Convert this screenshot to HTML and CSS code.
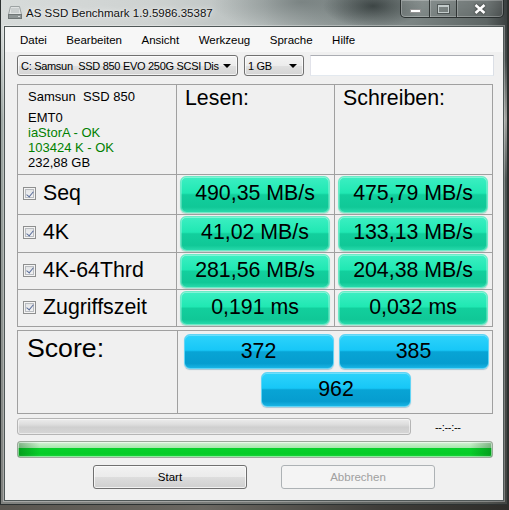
FILE: index.html
```html
<!DOCTYPE html>
<html lang="de">
<head>
    <meta charset="UTF-8">
    <title>AS SSD Benchmark 1.9.5986.35387</title>
    <link rel="stylesheet" href="styles.css">
</head>
<body>

<div class="window">
    <div class="titlebar">
        <!-- Laufwerks-Symbol -->
        <svg class="app-icon" width="16" height="15" viewBox="0 0 16 15">
            <path d="M3.5 1.5h9l2 8h-13z" fill="#dfe2e2" stroke="#9ca2a2"/>
            <path d="M5 3v5M7 3v5M9 3v5M11 3v5" stroke="#b4baba"/>
            <rect x="1.5" y="9.5" width="13" height="4" fill="#8e9595" stroke="#6f7676"/>
            <rect x="11" y="11" width="2" height="1" fill="#d6dada"/>
        </svg>
        <span class="title">AS SSD Benchmark 1.9.5986.35387</span>
        <div class="caption">
            <span class="cap min"><i></i></span>
            <span class="cap max"><i></i></span>
            <span class="cap close">
                <svg width="12" height="10" viewBox="0 0 12 10">
                    <path d="M1.5 1 L10.5 9 M10.5 1 L1.5 9" stroke="#fff" stroke-width="2.6"/>
                </svg>
            </span>
        </div>
    </div>

    <div class="client">
        <ul class="menu">
            <li>Datei</li>
            <li>Bearbeiten</li>
            <li>Ansicht</li>
            <li>Werkzeug</li>
            <li>Sprache</li>
            <li>Hilfe</li>
        </ul>

        <div class="content">
            <div class="toolbar">
                <div class="combo drive"><span>C: Samsun&nbsp; SSD 850 EVO 250G SCSI Dis</span><b></b></div>
                <div class="combo size"><span>1 GB</span><b></b></div>
                <div class="textbox"></div>
            </div>

            <div class="results">
                <div class="cell info">
                    <div class="model">Samsun&nbsp; SSD 850</div>
                    <div>EMT0</div>
                    <div class="ok">iaStorA - OK</div>
                    <div class="ok">103424 K - OK</div>
                    <div>232,88 GB</div>
                </div>
                <div class="cell head">Lesen:</div>
                <div class="cell head">Schreiben:</div>

                <div class="cell label"><span class="check"></span>Seq</div>
                <div class="cell"><div class="val">490,35 MB/s</div></div>
                <div class="cell"><div class="val">475,79 MB/s</div></div>

                <div class="cell label"><span class="check"></span>4K</div>
                <div class="cell"><div class="val">41,02 MB/s</div></div>
                <div class="cell"><div class="val">133,13 MB/s</div></div>

                <div class="cell label"><span class="check"></span>4K-64Thrd</div>
                <div class="cell"><div class="val">281,56 MB/s</div></div>
                <div class="cell"><div class="val">204,38 MB/s</div></div>

                <div class="cell label"><span class="check"></span>Zugriffszeit</div>
                <div class="cell"><div class="val">0,191 ms</div></div>
                <div class="cell"><div class="val">0,032 ms</div></div>
            </div>

            <div class="score">
                <div class="cell score-label">Score:</div>
                <div class="cell score-values">
                    <div class="total">372</div>
                    <div class="total">385</div>
                    <div class="total">962</div>
                </div>
            </div>

            <div class="progress-row">
                <div class="progress"></div>
                <span class="time">--:--:--</span>
            </div>
            <div class="progress done"></div>

            <div class="buttons">
                <button class="btn">Start</button>
                <button class="btn" disabled>Abbrechen</button>
            </div>
        </div>
    </div>
</div>

</body>
</html>
```

FILE: styles.css
```css
* {
    box-sizing: border-box;
}
body {
    margin: 0;
    width: 509px;
    height: 510px;
    overflow: hidden;
    font-family: "Liberation Sans", Arial, sans-serif;
    background: linear-gradient(90deg, #5a5650 0%, #6b6862 40%, #3f3d39 75%, #2e2d2a 100%);
}

/* Aero-Rahmen */
.window {
    width: 508px;
    height: 505px;
    padding: 0 3px 3px 3px;
    display: flex;
    flex-direction: column;
    border: 1px solid #2c3131;
    border-top: none;
    background:
        radial-gradient(ellipse 50px 22px at 372px 6px, rgba(38, 46, 46, 0.75), transparent),
        radial-gradient(ellipse 90px 30px at 300px 2px, rgba(80, 90, 90, 0.5), transparent),
        radial-gradient(ellipse 30px 60px at 505px 120px, rgba(230, 225, 220, 0.55), transparent),
        linear-gradient(180deg, transparent 0, transparent 30px, rgba(95, 110, 104, 0.45) 120px, rgba(70, 70, 66, 0.6) 100%),
        linear-gradient(90deg, #d7dbda 0%, #ced2d1 30%, #b8bfbe 52%, #8f9897 68%, #7a8382 82%, #5d6564 96%, #3b4040 100%);
}

.titlebar {
    height: 26px;
    display: flex;
    align-items: center;
    padding-left: 3px;
}
.app-icon {
    flex: none;
    margin-top: -1px;
}
.title {
    margin-left: 3px;
    font-size: 11.5px;
    color: #101010;
    text-shadow: 0 0 6px rgba(255, 255, 255, 0.9), 0 0 2px rgba(255, 255, 255, 0.7);
}

.caption {
    margin-left: auto;
    align-self: flex-start;
    display: flex;
    width: 104px;
    height: 18px;
    border: 1px solid rgba(35, 40, 40, 0.9);
    border-top: none;
    border-radius: 0 0 5px 5px;
    overflow: hidden;
    background: linear-gradient(rgba(255, 255, 255, 0.12), rgba(255, 255, 255, 0.04));
    box-shadow: inset 0 0 0 1px rgba(255, 255, 255, 0.25);
}
.cap {
    display: flex;
    align-items: center;
    justify-content: center;
    border-left: 1px solid rgba(35, 40, 40, 0.85);
    box-shadow: inset 1px 0 rgba(255, 255, 255, 0.22);
}
.cap.min {
    width: 28px;
    border-left: none;
    box-shadow: none;
}
.cap.max {
    width: 27px;
}
.cap.close {
    flex: 1;
}
.cap.min i {
    display: block;
    width: 11px;
    height: 4px;
    margin-top: 5px;
    background: #fff;
    border: 1px solid rgba(40, 40, 40, 0.5);
}
.cap.max i {
    display: block;
    width: 11px;
    height: 8px;
    border: 1px solid #c3cbcb;
    border-top-width: 2px;
    box-shadow: 0 0 0 1px rgba(40, 45, 45, 0.5);
}
.cap.close svg {
    filter: drop-shadow(0 0 1px rgba(30, 30, 30, 0.8));
}

/* Fensterinhalt */
.client {
    flex: 1;
    background: #f0f0f0;
    border: 1px solid #4f5757;
    box-shadow: 0 0 0 1px rgba(255, 255, 255, 0.3);
}
.menu {
    list-style: none;
    margin: 0;
    height: 25px;
    padding: 0 0 0 15px;
    display: flex;
    align-items: center;
    gap: 19.5px;
    background: #f7f7f7;
    font-size: 11.5px;
    color: #000;
}
.content {
    padding-left: 12px;
}

.toolbar {
    display: flex;
    gap: 6px;
    margin-top: 3px;
    height: 21px;
}
.combo {
    position: relative;
    display: flex;
    align-items: center;
    padding-left: 3px;
    border: 1px solid #707070;
    border-radius: 3px;
    background: linear-gradient(#f4f4f4 0%, #ececec 50%, #e0e0e0 51%, #d4d4d4 100%);
    box-shadow: inset 0 0 0 1px rgba(255, 255, 255, 0.7);
    font-size: 11px;
    letter-spacing: -0.3px;
}
.combo span {
    white-space: nowrap;
}
.combo b {
    position: absolute;
    right: 6px;
    top: 8px;
    border-left: 4px solid transparent;
    border-right: 4px solid transparent;
    border-top: 4px solid #000;
}
.combo.drive {
    width: 221px;
}
.combo.size {
    width: 60px;
}
.textbox {
    width: 184px;
    background: #fff;
    border: 1px solid;
    border-color: #abadb3 #dbdfe6 #e3e9ef #e2e3ea;
}

/* Ergebnistabelle */
.results, .score {
    display: grid;
    gap: 1px;
    padding: 1px;
    width: 476px;
    background: #a0a0a0;
}
.results {
    margin-top: 8px;
    grid-template-columns: 158px 157px 157px;
    grid-template-rows: 89px 39px 37px 36px 36px;
}
.cell {
    background: #f0f0f0;
    display: flex;
}
.info {
    flex-direction: column;
    padding: 4px 0 0 10px;
    font-size: 13px;
    line-height: 15px;
}
.info .model {
    margin-bottom: 6px;
}
.info .ok {
    color: #008000;
}
.head {
    padding: 1px 0 0 8px;
    font-size: 21.33px;
    line-height: 1.15;
}
.label {
    align-items: center;
    padding: 0 0 2px 5px;
    font-size: 21.33px;
}
.check {
    flex: none;
    width: 13px;
    height: 13px;
    margin-right: 7px;
    border: 1px solid #8e8f8f;
    background: linear-gradient(#dfe1e4, #f6f6f6);
    box-shadow: inset 0 0 0 1px #f4f4f4, inset 0 0 0 2px #b9bcc0;
    position: relative;
}
.check::after {
    content: "";
    position: absolute;
    left: 3.5px;
    top: 1.5px;
    width: 3px;
    height: 6px;
    border: solid #5a6d9a;
    border-width: 0 1.5px 1.5px 0;
    transform: rotate(40deg);
}
.val {
    flex: 1;
    margin: 1px 4px 1px 3px;
    display: flex;
    align-items: center;
    justify-content: center;
    padding-bottom: 2px;
    font-size: 21.33px;
    color: #000;
    border: 1px solid #6ceac6;
    border-radius: 6px;
    background: linear-gradient(#3cefc2 0%, #20e8b3 46%, #12cf9d 51%, #10c897 86%, #27d9ab 100%);
    box-shadow: inset 0 1px 0 rgba(255, 255, 255, 0.35), inset 1px 0 0 rgba(255, 255, 255, 0.25), inset -1px 0 0 rgba(255, 255, 255, 0.25), 0 1px 1px rgba(0, 140, 100, 0.25);
}

/* Score */
.score {
    margin-top: 3px;
    grid-template-columns: 159px 314px;
    grid-template-rows: 82px;
}
.score-label {
    padding: 2px 0 0 9px;
    font-size: 26.67px;
    line-height: 1.15;
}
.score-values {
    flex-wrap: wrap;
    justify-content: center;
    align-content: flex-start;
    gap: 3px 5px;
    padding: 3px 3px 0 5px;
}
.total {
    width: 150px;
    height: 35px;
    display: flex;
    align-items: center;
    justify-content: center;
    font-size: 21.33px;
    border: 1px solid #62d4f5;
    border-radius: 6px;
    background: linear-gradient(#2ed3fb 0%, #17c7f7 46%, #08a4d5 51%, #069dcf 86%, #19b4e4 100%);
    box-shadow: inset 0 1px 0 rgba(255, 255, 255, 0.3), 0 1px 1px rgba(0, 100, 150, 0.3);
}

/* Fortschritt */
.progress-row {
    display: flex;
    align-items: center;
    margin-top: 4px;
    height: 17px;
}
.progress {
    width: 394px;
    height: 17px;
    border: 1px solid #b5b5b5;
    border-radius: 3px;
    background: linear-gradient(#ececec 0%, #dedede 35%, #cfcfcf 55%, #d6d6d6 100%);
    box-shadow: inset 0 0 0 1px rgba(255, 255, 255, 0.5);
}
.time {
    margin-left: 24px;
    font-size: 11px;
    letter-spacing: -0.3px;
}
.progress.done {
    width: 476px;
    margin-top: 6px;
    border-color: #9aa89a;
    background:
        linear-gradient(90deg, rgba(0, 70, 10, 0.35) 0, transparent 22px, transparent calc(100% - 22px), rgba(0, 70, 10, 0.35) 100%),
        linear-gradient(#d6f3d8 0%, #a7e7ae 38%, #07d12b 42%, #05cc27 80%, #1fd640 100%);
}

/* Schaltflaechen */
.buttons {
    display: flex;
    gap: 34px;
    margin-top: 7px;
    padding-left: 76px;
}
.btn {
    width: 154px;
    height: 24px;
    padding: 0;
    font-family: "Liberation Sans", Arial, sans-serif;
    font-size: 11.5px;
    color: #000;
    border: 1px solid #707070;
    border-radius: 3px;
    background: linear-gradient(#f2f2f2 0%, #ebebeb 50%, #dddddd 51%, #cfcfcf 100%);
    box-shadow: inset 0 0 0 1px rgba(255, 255, 255, 0.7);
}
.btn:disabled {
    color: #a0a0a0;
    border-color: #adb2b5;
    background: #f4f4f4;
    box-shadow: none;
}
```
